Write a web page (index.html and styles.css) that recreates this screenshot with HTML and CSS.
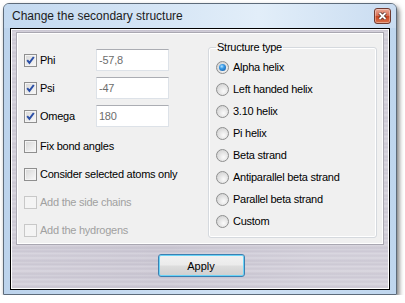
FILE: index.html
```html
<!DOCTYPE html>
<html lang="en">
<head>
  <meta charset="UTF-8" />
  <title>Change the secondary structure</title>
  <link rel="stylesheet" href="styles.css">
</head>
<body>
  <div class="window">
    <div class="titlebar">
      <span class="title">Change the secondary structure</span>
      <button class="close-btn" title="Close">
        <svg width="9" height="8" viewBox="0 0 9 8"><path d="M1.5 1 L7.5 7 M7.5 1 L1.5 7" stroke="#4a2a25" stroke-width="3.4"/><path d="M1.5 1 L7.5 7 M7.5 1 L1.5 7" stroke="#fff" stroke-width="1.8"/></svg>
      </button>
    </div>
    <div class="client">
      <div class="panel">
        <div class="options">
          <div class="row">
            <label class="check field-label"><span class="box checked"><svg width="11" height="11" viewBox="0 0 11 11"><path d="M2.2 5.2 L4.4 7.8 L8.8 2" fill="none" stroke="#2b4fa6" stroke-width="2"/></svg></span>Phi</label>
            <input class="num" value="-57,8">
          </div>
          <div class="row">
            <label class="check field-label"><span class="box checked"><svg width="11" height="11" viewBox="0 0 11 11"><path d="M2.2 5.2 L4.4 7.8 L8.8 2" fill="none" stroke="#2b4fa6" stroke-width="2"/></svg></span>Psi</label>
            <input class="num" value="-47">
          </div>
          <div class="row">
            <label class="check field-label"><span class="box checked"><svg width="11" height="11" viewBox="0 0 11 11"><path d="M2.2 5.2 L4.4 7.8 L8.8 2" fill="none" stroke="#2b4fa6" stroke-width="2"/></svg></span>Omega</label>
            <input class="num" value="180">
          </div>
          <label class="check row first-check"><span class="box"></span>Fix bond angles</label>
          <label class="check row"><span class="box"></span>Consider selected atoms only</label>
          <label class="check row disabled"><span class="box"></span>Add the side chains</label>
          <label class="check row disabled"><span class="box"></span>Add the hydrogens</label>
        </div>
        <fieldset class="group">
          <legend>Structure type</legend>
          <label class="radio"><span class="dot on"></span>Alpha helix</label>
          <label class="radio"><span class="dot"></span>Left handed helix</label>
          <label class="radio"><span class="dot"></span>3.10 helix</label>
          <label class="radio"><span class="dot"></span>Pi helix</label>
          <label class="radio"><span class="dot"></span>Beta strand</label>
          <label class="radio"><span class="dot"></span>Antiparallel beta strand</label>
          <label class="radio"><span class="dot"></span>Parallel beta strand</label>
          <label class="radio"><span class="dot"></span>Custom</label>
        </fieldset>
      </div>
      <div class="footer">
        <button class="apply-btn">Apply</button>
      </div>
    </div>
  </div>
</body>
</html>
```

FILE: styles.css
```css
:root {
  --frame: #5d6b7a;
  --face: #f0f0f0;
  --text: #000000;
  --muted: #a0a0a0;
  --metal-a: #ccc8d4;
  --metal-b: #c4c0cd;
  --metal-c: #d7d4de;
}

html, body { margin: 0; background: #fff; }
body {
  font-family: "Liberation Sans", Arial, sans-serif;
  font-size: 11px;
  letter-spacing: -0.25px;
  color: var(--text);
}

.window {
  margin: 3px 0 0 3px;
  width: 394px;
  height: 292px;
  box-sizing: border-box;
  border: 1px solid var(--frame);
  border-radius: 6px 6px 0 0;
  background: linear-gradient(90deg, #bcd3ec, #cfe1f4 60%, #bfd6ee);
  box-shadow: 2px 3px 5px rgba(0,0,0,.55);
  display: flex;
  flex-direction: column;
}

.titlebar {
  height: 24px;
  flex: none;
  display: flex;
  align-items: center;
  padding: 0 5px 0 8px;
  border-radius: 5px 5px 0 0;
  background: linear-gradient(90deg, #c3d9f0 0%, #d8e7f6 45%, #e2eef9 65%, #c9dcf1 100%);
}
.title { font-size: 12px; letter-spacing: 0; color: #1c1c1c; }
.close-btn {
  margin-left: auto;
  width: 17px;
  height: 16px;
  padding: 0;
  border: 1px solid #6f3a30;
  border-radius: 3px;
  background: linear-gradient(#eaa896 0%, #d86d52 48%, #c9431f 52%, #d9734c 100%);
  box-shadow: inset 0 0 0 1px rgba(255,255,255,.35);
  display: flex;
  align-items: center;
  justify-content: center;
}

.client {
  flex: 1;
  margin: 0 6px 4px;
  border: 1px solid #000;
  box-shadow: inset 0 0 0 1px #fff;
  background:
    linear-gradient(90deg, rgba(255,255,255,.1), rgba(255,255,255,0) 40%, rgba(255,255,255,.12) 80%),
    repeating-linear-gradient(180deg,
      var(--metal-a) 0, var(--metal-b) 2px, var(--metal-c) 3px, var(--metal-a) 5px,
      #c8c4d0 6px, var(--metal-c) 8px, #cfcbd6 9px, var(--metal-b) 11px, #d3d0da 13px);
  display: flex;
  flex-direction: column;
}

.panel {
  margin: 3px 5px 0;
  height: 213px;
  flex: none;
  box-sizing: border-box;
  border: 1px solid #a9a7b1;
  box-shadow: inset 0 0 0 1px #fff;
  background: var(--face);
  display: flex;
}

/* left column */
.options {
  width: 191px;
  box-sizing: border-box;
  padding: 16px 0 0 7px;
  display: flex;
  flex-direction: column;
  gap: 6px;
}
.row { height: 22px; display: flex; align-items: center; }
.first-check { margin-top: 2px; }
.check { display: flex; align-items: center; }
.field-label { width: 72px; height: 22px; flex: none; }
.box {
  width: 13px;
  height: 13px;
  box-sizing: border-box;
  margin-right: 3px;
  border: 1px solid #8f8f8f;
  background: linear-gradient(135deg, #d6d6d6, #fafafa);
  box-shadow: inset 0 0 0 1px #f4f4f4;
  display: flex;
  align-items: center;
  justify-content: center;
  flex: none;
}
.box svg { display: block; }
.disabled { color: var(--muted); }
.disabled .box { border-color: #c8c8c8; background: #f4f4f4; box-shadow: none; }

.num {
  width: 73px;
  height: 22px;
  box-sizing: border-box;
  padding: 0 2px;
  border: 1px solid #dde2e8;
  border-top-color: #abadb3;
  background: #fff;
  font-family: inherit;
  font-size: 11px;
  letter-spacing: -0.25px;
  color: #6d6d6d;
}

/* structure type group */
.group {
  margin: 8px 0 0 0;
  width: 169px;
  box-sizing: border-box;
  align-self: flex-start;
  padding: 2px 0 5px 7px;
  border: 1px solid #d5d9de;
  border-radius: 3px;
  box-shadow: inset 0 0 0 1px #fff;
}
.group legend { padding: 0 1px; line-height: 13px; }
.radio { height: 22px; display: flex; align-items: center; }
.dot {
  width: 13px;
  height: 13px;
  box-sizing: border-box;
  margin-right: 4px;
  border: 1px solid #8e8f8f;
  border-radius: 50%;
  background: radial-gradient(circle at 60% 65%, #fbfbfb, #d8d8d8 70%);
  flex: none;
  display: flex;
  align-items: center;
  justify-content: center;
}
.dot.on::after {
  content: "";
  width: 7px;
  height: 7px;
  border-radius: 50%;
  background: radial-gradient(circle at 40% 35%, #b8e4ff 0, #3a9be6 35%, #0e4f9a 100%);
}

/* bottom button strip */
.footer {
  flex: 1;
  display: flex;
  justify-content: center;
  align-items: flex-start;
  padding-top: 9px;
}
.apply-btn {
  margin-left: 2px;
  width: 87px;
  height: 23px;
  border: 1px solid #3c7fb1;
  border-radius: 3px;
  background: linear-gradient(#f2f2f2 0%, #ebebeb 48%, #dddddd 52%, #cfcfcf 100%);
  box-shadow: inset 0 0 0 1px #6ad4f7;
  font-family: inherit;
  font-size: 11px;
  color: #000;
  padding: 0;
}
```
